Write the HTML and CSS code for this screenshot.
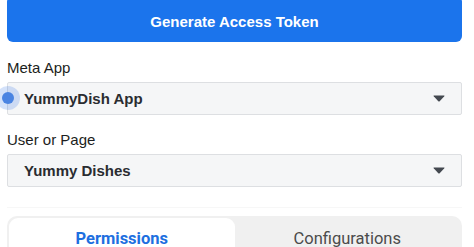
FILE: index.html
```html
<!DOCTYPE html>
<html>
<head>
<meta charset="utf-8">
<link rel="stylesheet" href="styles.css">
</head>
<body>
<div class="page">
  <button class="gen-btn">Generate Access Token</button>
  <div class="field">
    <div class="label">Meta App</div>
    <div class="select">
      <span class="focus-dot"></span>
      <span class="value">YummyDish App</span>
      <svg class="caret" width="12" height="7" viewBox="0 0 12 7"><path d="M1 0.5 H11 Q12 0.5 11.3 1.3 L6.7 6.2 Q6 6.9 5.3 6.2 L0.7 1.3 Q0 0.5 1 0.5 Z" fill="#444950"/></svg>
    </div>
  </div>
  <div class="field">
    <div class="label">User or Page</div>
    <div class="select">
      <span class="value">Yummy Dishes</span>
      <svg class="caret" width="12" height="7" viewBox="0 0 12 7"><path d="M1 0.5 H11 Q12 0.5 11.3 1.3 L6.7 6.2 Q6 6.9 5.3 6.2 L0.7 1.3 Q0 0.5 1 0.5 Z" fill="#444950"/></svg>
    </div>
  </div>
  <div class="divider"></div>
  <div class="tabs">
    <div class="tab active">Permissions</div>
    <div class="tab">Configurations</div>
  </div>
</div>
</body>
</html>
```
FILE: styles.css
```css
html, body {
  margin: 0;
  padding: 0;
  background: #ffffff;
  overflow: hidden;
}
.page {
  width: 455px;
  padding-left: 7px;
  font-family: "Liberation Sans", Arial, sans-serif;
}
.gen-btn {
  display: block;
  width: 455px;
  height: 46px;
  margin-top: -4px;
  border: none;
  border-radius: 6px;
  background: #1b74ec;
  color: #ffffff;
  font-family: "Liberation Sans", Arial, sans-serif;
  font-weight: bold;
  font-size: 15px;
  padding: 4px 0 0 0;
  text-align: center;
}
.field {
  margin-top: 16px;
}
.field + .field {
  margin-top: 15px;
}
.label {
  font-size: 15px;
  line-height: 20px;
  color: #1c1e21;
  margin-bottom: 4px;
}
.select {
  position: relative;
  box-sizing: border-box;
  height: 33px;
  border: 1px solid #dddfe2;
  border-radius: 2px;
  background: #f5f6f7;
  display: flex;
  align-items: center;
  padding: 0 16px 0 16px;
}
.value {
  flex: 1;
  font-weight: bold;
  font-size: 15px;
  color: #2a2c30;
}
.caret {
  display: block;
}
.focus-dot {
  position: absolute;
  left: -12px;
  top: 3px;
  width: 24px;
  height: 24px;
  border-radius: 50%;
  background: rgba(40, 110, 230, 0.2);
}
.focus-dot::after {
  content: "";
  position: absolute;
  left: 6px;
  top: 6px;
  width: 12px;
  height: 12px;
  border-radius: 50%;
  background: #4a84e2;
}
.divider {
  height: 1px;
  background: #f7f7f7;
  margin-top: 20px;
}
.tabs {
  margin-top: 8px;
  display: flex;
  padding: 2px 2px 0 2px;
  background: #f0f0f0;
  border-radius: 10px 10px 0 0;
  height: 40px;
}
.tab {
  flex: 1;
  text-align: center;
  font-family: Roboto, "Liberation Sans", sans-serif;
  font-size: 16.5px;
  line-height: 20px;
  padding-top: 11px;
  color: #4b4b4b;
}
.tab.active {
  background: #ffffff;
  border-radius: 9px 9px 0 0;
  color: #1d6fe0;
  font-weight: bold;
}
```
